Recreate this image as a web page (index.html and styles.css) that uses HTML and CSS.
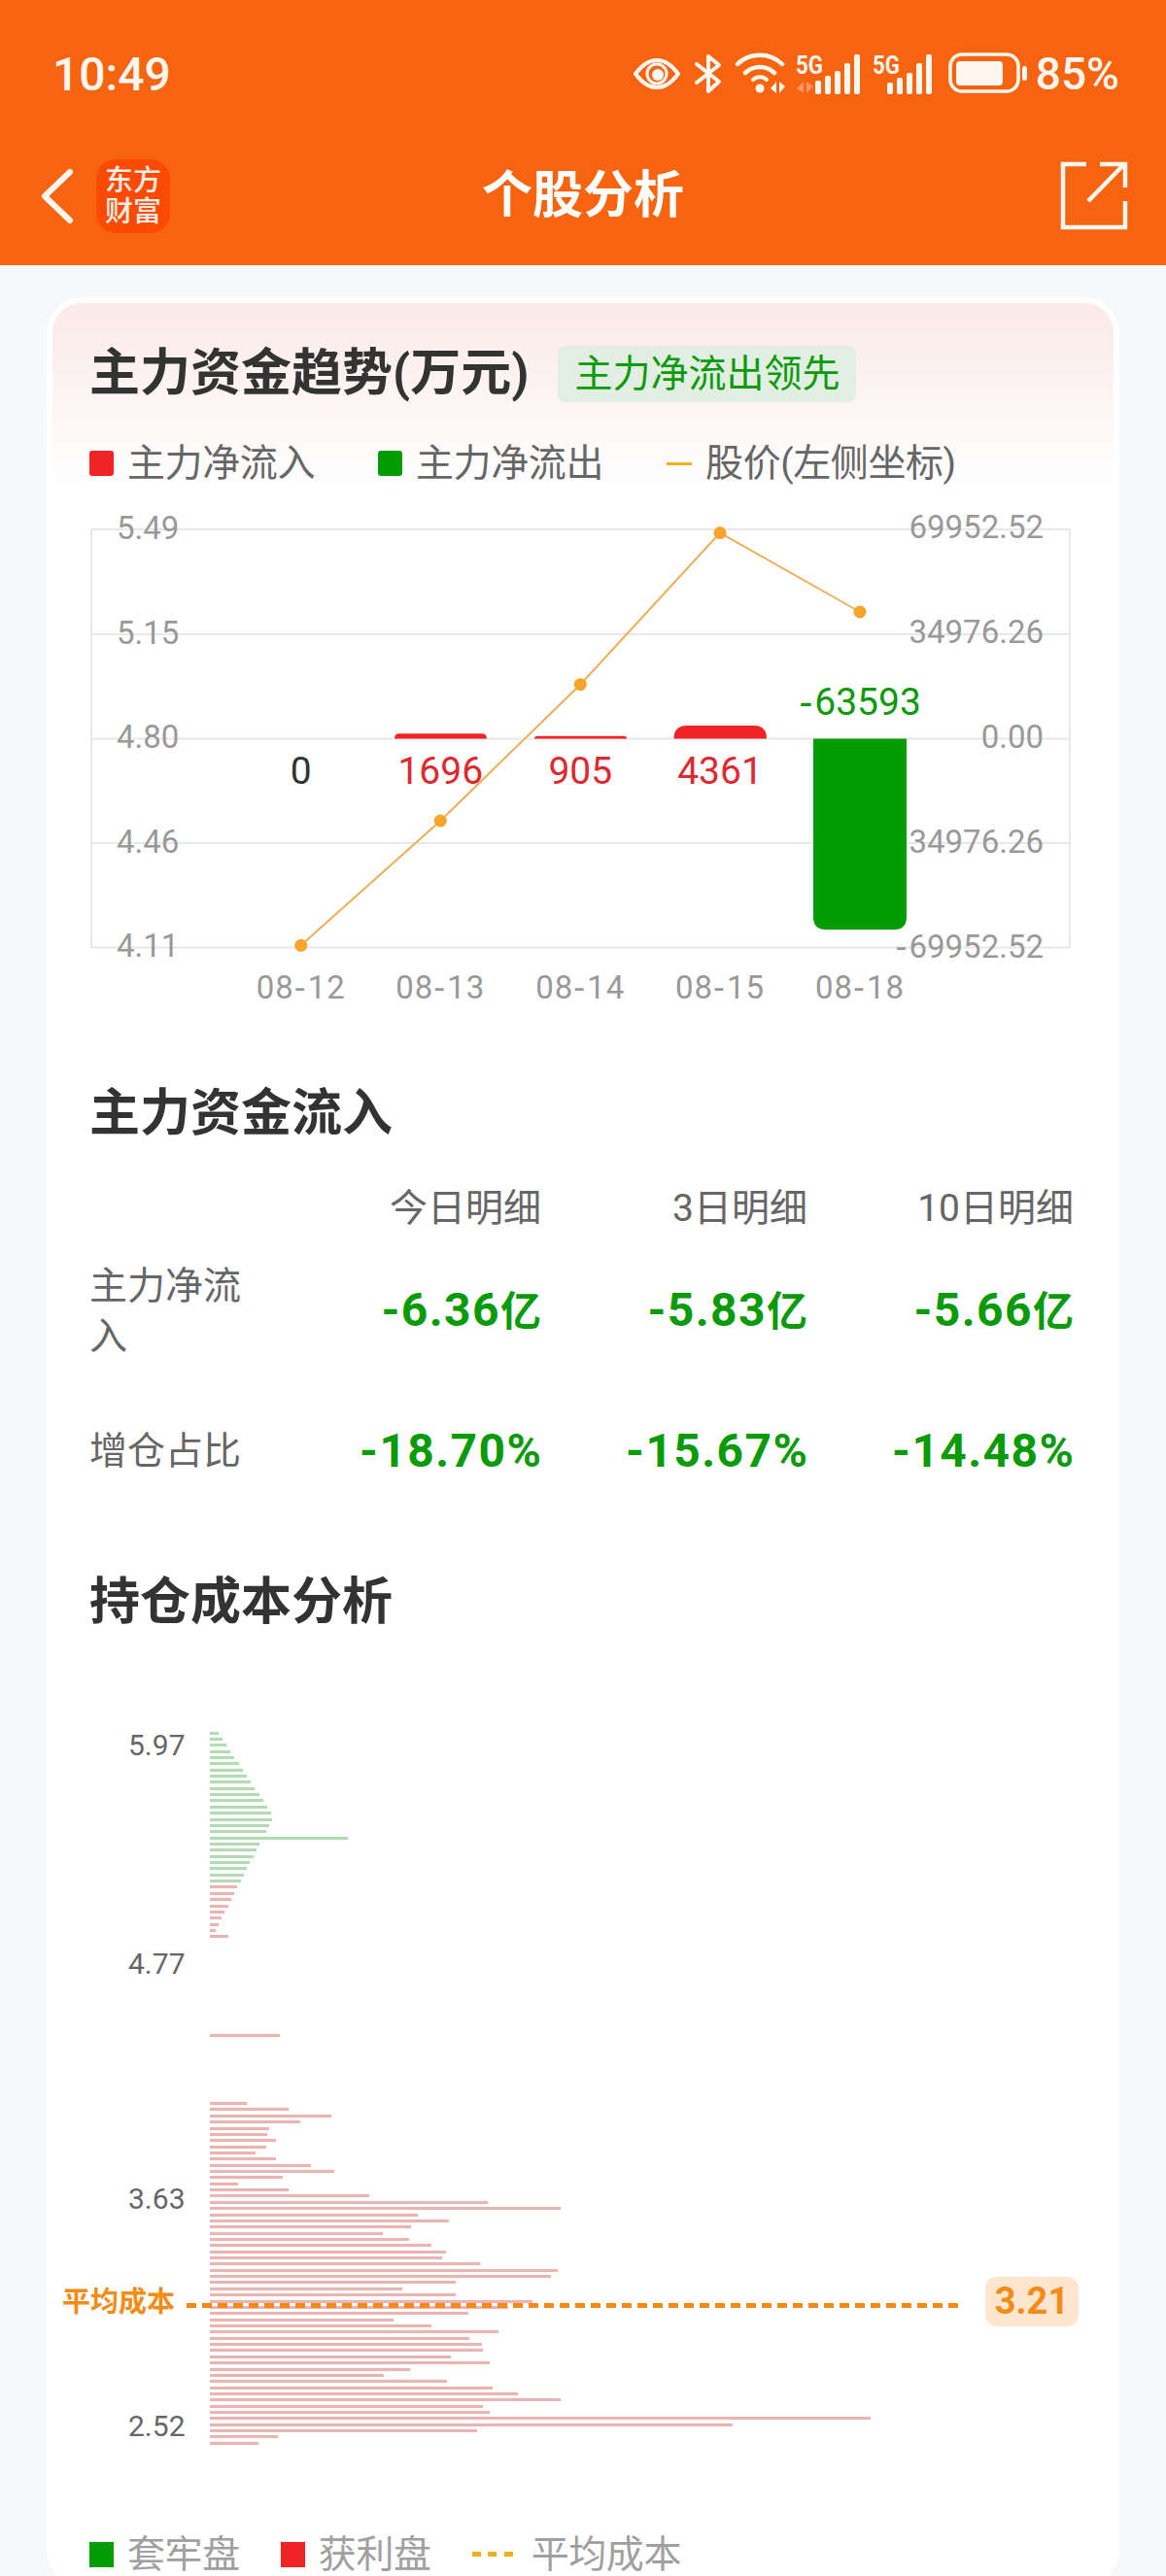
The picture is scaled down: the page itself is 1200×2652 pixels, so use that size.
FILE: index.html
```html
<!DOCTYPE html>
<html lang="zh-CN">
<head>
    <meta charset="UTF-8">
    <title>个股分析</title>
    <meta name="viewport" content="width=device-width, initial-scale=1.0">
    <link rel="stylesheet" href="styles.css">
</head>
<body>
    <header class="topbar">
        <div class="status">
            <span class="clock">10:49</span>
            <div class="status-right">
                <svg class="status-icons" width="406" height="52" viewBox="654 50 406 52">
                    <!-- eye -->
                    <path class="ico" stroke-width="4" d="M656 76C664 65 672 62 678 62C684 62 692 65 700 76C692 87 684 90 678 90C672 90 664 87 656 76Z"/>
                    <circle class="ico" stroke-width="3" cx="678" cy="76" r="10"/>
                    <circle class="ico-fill" cx="679" cy="77" r="6"/>
                    <!-- bluetooth -->
                    <path class="ico" stroke-width="4" d="M719 66L742 84L731 94V58L742 67L719 85"/>
                    <!-- wifi -->
                    <path class="ico" stroke-width="4.5" d="M761 66A33 33 0 0 1 807 66M769 75A22 22 0 0 1 799 75"/>
                    <path class="ico" stroke-width="4" d="M777 82A10 10 0 0 1 791 82"/>
                    <circle class="ico-fill" cx="784" cy="91" r="4.5"/>
                    <polygon class="ico-fill" points="801,84 801,96 795,91"/>
                    <polygon class="ico-fill" points="804,84 804,96 810,89"/>
                    <!-- first sim -->
                    <text class="sim" x="821" y="76" textLength="28" lengthAdjust="spacingAndGlyphs">5G</text>
                    <polygon class="ico-faint" points="829,84 829,96 822,91"/>
                    <polygon class="ico-faint" points="832,84 832,96 839,89"/>
                    <rect class="ico-fill" x="841" y="83" width="6" height="14" rx="2"/>
                    <rect class="ico-fill" x="851" y="78" width="6" height="19" rx="2"/>
                    <rect class="ico-fill" x="861" y="73" width="6" height="24" rx="2"/>
                    <rect class="ico-fill" x="871" y="65" width="6" height="32" rx="2"/>
                    <rect class="ico-fill" x="881" y="56" width="6" height="41" rx="2"/>
                    <!-- second sim -->
                    <text class="sim" x="900" y="76" textLength="28" lengthAdjust="spacingAndGlyphs">5G</text>
                    <rect class="ico-fill" x="915" y="85" width="6" height="12" rx="2"/>
                    <rect class="ico-fill" x="925" y="80" width="6" height="17" rx="2"/>
                    <rect class="ico-fill" x="935" y="75" width="6" height="22" rx="2"/>
                    <rect class="ico-fill" x="945" y="65" width="6" height="32" rx="2"/>
                    <rect class="ico-fill" x="955" y="56" width="6" height="41" rx="2"/>
                    <!-- battery -->
                    <rect class="ico" stroke-width="3.5" x="980" y="56" width="70" height="38" rx="12"/>
                    <rect class="ico-fill" x="986" y="63" width="48" height="25" rx="4"/>
                    <rect class="ico-fill" x="1054" y="68" width="5" height="15" rx="2.5"/>
                </svg>
                <span class="battery-pct">85%</span>
            </div>
        </div>
        <nav class="nav">
            <div class="nav-left">
                <svg width="38" height="62" viewBox="40 172 38 62">
                    <path class="ico" stroke-width="6" d="M72 178L46 203L72 228"/>
                </svg>
                <div class="app-logo">东方<br>财富</div>
            </div>
            <h1 class="nav-title">个股分析</h1>
            <div class="nav-right">
                <svg width="72" height="74" viewBox="1092 165 72 74">
                    <path class="ico-square" stroke-width="4.5" d="M1120 169H1096V234H1160V207M1122 207L1159 169M1134 169H1160V193"/>
                </svg>
            </div>
        </nav>
    </header>

    <main class="page">
        <div class="card">
            <div class="card-inner">
                <div class="trend-head">
                    <h2 class="sec-title">主力资金趋势(万元)</h2>
                    <span class="lead-tag">主力净流出领先</span>
                </div>
                <div class="legend trend-legend">
                    <span class="legend-item"><i class="swatch swatch-red"></i>主力净流入</span>
                    <span class="legend-item"><i class="swatch swatch-green"></i>主力净流出</span>
                    <span class="legend-item"><i class="dash-solid"></i>股价(左侧坐标)</span>
                </div>

                <svg class="trend-chart" width="1092" height="520" viewBox="54 520 1092 520">
                    <line class="grid-line" x1="94" y1="545" x2="1101" y2="545"/>
                    <line class="grid-line" x1="94" y1="653" x2="1101" y2="653"/>
                    <line class="grid-line" x1="94" y1="760.5" x2="1101" y2="760.5"/>
                    <line class="grid-line" x1="94" y1="868" x2="1101" y2="868"/>
                    <line class="grid-line" x1="94" y1="975.5" x2="1101" y2="975.5"/>
                    <line class="grid-line" x1="94" y1="545" x2="94" y2="975.5"/>
                    <line class="grid-line" x1="1101" y1="545" x2="1101" y2="975.5"/>

                    <text class="axis-label" x="120" y="555">5.49</text>
                    <text class="axis-label" x="120" y="663">5.15</text>
                    <text class="axis-label" x="120" y="770">4.80</text>
                    <text class="axis-label" x="120" y="878">4.46</text>
                    <text class="axis-label" x="120" y="985">4.11</text>

                    <path class="bar-red" d="M406 760.5Q406 755.3 411 755.3H496Q501 755.3 501 760.5Z"/>
                    <path class="bar-red" d="M550 760.5Q550 757.7 553 757.7H642Q645 757.7 645 760.5Z"/>
                    <path class="bar-red" d="M693.5 760.5Q693.5 747 707 747H776Q789 747 789 760.5Z"/>
                    <path class="bar-green" d="M837 760.5H933V944Q933 957 920 957H850Q837 957 837 944Z"/>

                    <text class="axis-label axis-end" x="1074" y="554">69952.52</text>
                    <text class="axis-label axis-end" x="1074" y="662">34976.26</text>
                    <text class="axis-label axis-end" x="1074" y="770">0.00</text>
                    <text class="axis-label axis-end" x="1074" y="878">34976.26</text>
                    <text class="axis-label axis-end" x="1074" y="986"><tspan class="wide-dash">-</tspan>69952.52</text>

                    <polyline class="price-line" points="309.7,973.3 453.3,845 597.3,704.7 741,548.6 885,630"/>
                    <circle class="price-dot" cx="309.7" cy="973.3" r="6.5"/>
                    <circle class="price-dot" cx="453.3" cy="845" r="6.5"/>
                    <circle class="price-dot" cx="597.3" cy="704.7" r="6.5"/>
                    <circle class="price-dot" cx="741" cy="548.6" r="6.5"/>
                    <circle class="price-dot" cx="885" cy="630" r="6.5"/>

                    <text class="bar-value value-zero" x="309.7" y="807">0</text>
                    <text class="bar-value value-red" x="453.3" y="807">1696</text>
                    <text class="bar-value value-red" x="597.3" y="807">905</text>
                    <text class="bar-value value-red" x="741" y="807">4361</text>
                    <text class="bar-value value-green" x="885" y="736"><tspan class="wide-dash">-</tspan>63593</text>

                    <text class="axis-label axis-date" x="309.7" y="1028">08<tspan class="wide-dash">-</tspan>12</text>
                    <text class="axis-label axis-date" x="453.3" y="1028">08<tspan class="wide-dash">-</tspan>13</text>
                    <text class="axis-label axis-date" x="597.3" y="1028">08<tspan class="wide-dash">-</tspan>14</text>
                    <text class="axis-label axis-date" x="741" y="1028">08<tspan class="wide-dash">-</tspan>15</text>
                    <text class="axis-label axis-date" x="885" y="1028">08<tspan class="wide-dash">-</tspan>18</text>
                </svg>

                <h2 class="sec-title flow-title">主力资金流入</h2>
                <div class="flow-table">
                    <span></span>
                    <span class="flow-head">今日明细</span>
                    <span class="flow-head">3日明细</span>
                    <span class="flow-head">10日明细</span>
                    <span class="flow-label">主力净流入</span>
                    <span class="flow-value">-6.36<span class="flow-unit">亿</span></span>
                    <span class="flow-value">-5.83<span class="flow-unit">亿</span></span>
                    <span class="flow-value">-5.66<span class="flow-unit">亿</span></span>
                    <span class="flow-label">增仓占比</span>
                    <span class="flow-value">-18.70%</span>
                    <span class="flow-value">-15.67%</span>
                    <span class="flow-value">-14.48%</span>
                </div>

                <h2 class="sec-title cost-title">持仓成本分析</h2>
                <div class="cost-chart">
                    <div class="bar up" style="width:9px"></div>
                    <div class="bar up" style="width:13px"></div>
                    <div class="bar up" style="width:17px"></div>
                    <div class="bar up" style="width:21px"></div>
                    <div class="bar up" style="width:25px"></div>
                    <div class="bar up" style="width:30px"></div>
                    <div class="bar up" style="width:34px"></div>
                    <div class="bar up" style="width:38px"></div>
                    <div class="bar up" style="width:42px"></div>
                    <div class="bar up" style="width:46px"></div>
                    <div class="bar up" style="width:51px"></div>
                    <div class="bar up" style="width:55px"></div>
                    <div class="bar up" style="width:59px"></div>
                    <div class="bar up" style="width:63px"></div>
                    <div class="bar up" style="width:64px"></div>
                    <div class="bar up" style="width:61px"></div>
                    <div class="bar up" style="width:58px"></div>
                    <div class="bar up" style="width:142px"></div>
                    <div class="bar up" style="width:51px"></div>
                    <div class="bar up" style="width:48px"></div>
                    <div class="bar up" style="width:45px"></div>
                    <div class="bar up" style="width:41px"></div>
                    <div class="bar up" style="width:38px"></div>
                    <div class="bar up" style="width:35px"></div>
                    <div class="bar up" style="width:32px"></div>
                    <div class="bar down" style="width:28px"></div>
                    <div class="bar down" style="width:25px"></div>
                    <div class="bar down" style="width:22px"></div>
                    <div class="bar down" style="width:19px"></div>
                    <div class="bar down" style="width:15px"></div>
                    <div class="bar down" style="width:12px"></div>
                    <div class="bar down" style="width:9px"></div>
                    <div class="bar down" style="width:6px"></div>
                    <div class="bar down" style="width:19px"></div>
                    <div class="bar-gap-long"></div>
                    <div class="bar down" style="width:72px"></div>
                    <div class="bar-gap-short"></div>
                    <div class="bar down" style="width:38px"></div>
                    <div class="bar down" style="width:81px"></div>
                    <div class="bar down" style="width:125px"></div>
                    <div class="bar down" style="width:93px"></div>
                    <div class="bar down" style="width:61px"></div>
                    <div class="bar down" style="width:59px"></div>
                    <div class="bar down" style="width:68px"></div>
                    <div class="bar down" style="width:58px"></div>
                    <div class="bar down" style="width:47px"></div>
                    <div class="bar down" style="width:68px"></div>
                    <div class="bar down" style="width:104px"></div>
                    <div class="bar down" style="width:128px"></div>
                    <div class="bar down" style="width:75px"></div>
                    <div class="bar down" style="width:29px"></div>
                    <div class="bar down" style="width:81px"></div>
                    <div class="bar down" style="width:164px"></div>
                    <div class="bar down" style="width:286px"></div>
                    <div class="bar down" style="width:361px"></div>
                    <div class="bar down" style="width:214px"></div>
                    <div class="bar down" style="width:246px"></div>
                    <div class="bar down" style="width:207px"></div>
                    <div class="bar down" style="width:178px"></div>
                    <div class="bar down" style="width:205px"></div>
                    <div class="bar down" style="width:228px"></div>
                    <div class="bar down" style="width:243px"></div>
                    <div class="bar down" style="width:239px"></div>
                    <div class="bar down" style="width:278px"></div>
                    <div class="bar down" style="width:358px"></div>
                    <div class="bar down" style="width:351px"></div>
                    <div class="bar down" style="width:253px"></div>
                    <div class="bar down" style="width:198px"></div>
                    <div class="bar down" style="width:253px"></div>
                    <div class="bar down" style="width:332px"></div>
                    <div class="bar down" style="width:307px"></div>
                    <div class="bar down" style="width:266px"></div>
                    <div class="bar down" style="width:189px"></div>
                    <div class="bar down" style="width:228px"></div>
                    <div class="bar down" style="width:297px"></div>
                    <div class="bar down" style="width:267px"></div>
                    <div class="bar down" style="width:280px"></div>
                    <div class="bar down" style="width:281px"></div>
                    <div class="bar down" style="width:248px"></div>
                    <div class="bar down" style="width:288px"></div>
                    <div class="bar down" style="width:206px"></div>
                    <div class="bar down" style="width:179px"></div>
                    <div class="bar down" style="width:244px"></div>
                    <div class="bar down" style="width:291px"></div>
                    <div class="bar down" style="width:317px"></div>
                    <div class="bar down" style="width:361px"></div>
                    <div class="bar down" style="width:281px"></div>
                    <div class="bar down" style="width:288px"></div>
                    <div class="bar down" style="width:680px"></div>
                    <div class="bar down" style="width:538px"></div>
                    <div class="bar down" style="width:275px"></div>
                    <div class="bar down" style="width:70px"></div>
                    <div class="bar down" style="width:50px"></div>

                    <span class="price-tick tick-597">5.97</span>
                    <span class="price-tick tick-477">4.77</span>
                    <span class="price-tick tick-363">3.63</span>
                    <span class="price-tick tick-252">2.52</span>
                    <span class="avg-label">平均成本</span>
                    <div class="avg-line"></div>
                    <span class="avg-value">3.21</span>
                </div>
                <div class="legend cost-legend">
                    <span class="legend-item"><i class="swatch-flat swatch-green"></i>套牢盘</span>
                    <span class="legend-item"><i class="swatch-flat swatch-red"></i>获利盘</span>
                    <span class="legend-item"><i class="dash-dotted"></i>平均成本</span>
                </div>
            </div>
        </div>
    </main>
</body>
</html>
```

FILE: styles.css
```css
:root {
    --orange: #f76410;
    --ink: #333333;
    --grey: #666666;
    --light: #999999;
    --red: #f02425;
    --green: #049c04;
    --cost: #f28c16;
}
html, body {
    margin: 0;
    padding: 0;
}
body {
    width: 1200px;
    height: 2652px;
    overflow: hidden;
    background: #f7f8fa;
    font-family: Roboto, "Noto Sans CJK SC", sans-serif;
    color: var(--ink);
}
h1, h2 {
    margin: 0;
}

/* top bar */
.topbar {
    height: 273px;
    background: var(--orange);
    color: #fff;
}
.status {
    height: 152px;
    padding: 0 48px 0 54px;
    box-sizing: border-box;
    display: flex;
    align-items: center;
    justify-content: space-between;
    color: #fff6f0;
}
.clock {
    font-size: 48px;
    font-weight: 500;
}
.status-right {
    display: flex;
    align-items: center;
    gap: 8px;
}
.battery-pct {
    font-size: 46px;
    font-weight: 500;
}
.ico {
    fill: none;
    stroke: #fff6f0;
    stroke-linecap: round;
    stroke-linejoin: round;
}
.ico-square {
    fill: none;
    stroke: #fff6f0;
}
.ico-fill {
    fill: #fff6f0;
}
.ico-faint {
    fill: #fb9561;
}
.sim {
    fill: #fff6f0;
    font-size: 25px;
    font-weight: 700;
}
.nav {
    height: 121px;
    padding: 0 38px 21px;
    box-sizing: border-box;
    display: grid;
    grid-template-columns: 1fr auto 1fr;
    align-items: center;
}
.nav-left {
    display: flex;
    align-items: center;
    gap: 21px;
    padding-left: 2px;
}
.nav-right {
    display: flex;
    justify-content: flex-end;
}
.app-logo {
    width: 76px;
    height: 76px;
    border-radius: 20px;
    background: #fb4a04;
    color: #ffeee6;
    font-size: 29px;
    font-weight: 500;
    line-height: 32px;
    text-align: center;
    padding-top: 6px;
    box-sizing: border-box;
}
.nav-title {
    font-size: 52px;
    font-weight: 700;
    line-height: 72px;
}

/* card */
.page {
    padding: 33px 48px 0;
}
.card {
    background: #fff;
    border-radius: 36px;
    padding: 6px;
}
.card-inner {
    padding: 37px 39px 0 38px;
    border-radius: 30px;
    background: linear-gradient(#fae9e8 0, #ffffff 190px);
}
.sec-title {
    font-size: 52px;
    font-weight: 700;
    line-height: 72px;
    color: var(--ink);
}
.trend-head {
    display: flex;
    align-items: center;
    gap: 30px;
}
.lead-tag {
    height: 58px;
    padding: 0 17px;
    border-radius: 8px;
    background: #e3eee3;
    color: #0a9a0a;
    font-size: 39px;
    line-height: 58px;
}

/* legends */
.legend {
    display: flex;
    align-items: center;
    line-height: 52px;
    font-size: 39px;
}
.trend-legend {
    margin-top: 30px;
    gap: 65px;
    letter-spacing: -0.4px;
    color: var(--grey);
}
.legend-item {
    display: flex;
    align-items: center;
    gap: 14px;
}
.swatch {
    width: 25px;
    height: 26px;
    border-radius: 3px;
}
.swatch-flat {
    width: 25px;
    height: 26px;
}
.swatch-red {
    background: var(--red);
}
.swatch-green {
    background: var(--green);
}
.dash-solid {
    width: 26px;
    height: 3px;
    background: #eeb01f;
}
.dash-dotted {
    width: 42px;
    height: 5px;
    margin-right: 5px;
    background: repeating-linear-gradient(90deg, #eeb01f 0 9px, transparent 9px 16.5px);
}
.cost-legend {
    margin-top: 87px;
    gap: 42px;
    letter-spacing: -0.4px;
    color: #a0a0a0;
}

/* trend chart */
.trend-chart {
    display: block;
    margin: 17px -39px 0 -38px;
}
.grid-line {
    stroke: #e8e8e8;
    stroke-width: 2;
}
.axis-label {
    fill: var(--light);
    font-size: 33px;
}
.axis-end {
    text-anchor: end;
}
.axis-date {
    text-anchor: middle;
    letter-spacing: 1px;
}
.wide-dash {
    font-family: "DejaVu Sans", sans-serif;
    letter-spacing: 2px;
}
.bar-red {
    fill: var(--red);
}
.bar-green {
    fill: var(--green);
}
.price-line {
    fill: none;
    stroke: #efae58;
    stroke-width: 2;
}
.price-dot {
    fill: #f7a42c;
}
.bar-value {
    font-size: 39px;
    text-anchor: middle;
}
.value-zero {
    fill: var(--ink);
}
.value-red {
    fill: #dc2a30;
}
.value-green {
    fill: #0a9a0a;
}

/* inflow table */
.flow-title {
    margin-top: 71px;
}
.flow-table {
    margin-top: 35px;
    display: grid;
    grid-template-columns: 191px 274px 274px 274px;
    grid-template-rows: 52px 160px 128px;
    align-items: center;
}
.flow-head {
    text-align: right;
    font-size: 39px;
    line-height: 52px;
    color: var(--grey);
}
.flow-label {
    width: 160px;
    font-size: 39px;
    line-height: 52.5px;
    color: var(--grey);
}
.flow-value {
    text-align: right;
    font-size: 48px;
    font-weight: 700;
    line-height: 52px;
    letter-spacing: 1.4px;
    margin-right: -1.4px;
    color: #0a9a0a;
}
.flow-unit {
    font-size: 42px;
}

/* cost distribution */
.cost-title {
    margin-top: 56px;
}
.cost-chart {
    position: relative;
    padding: 96.5px 0 0 124px;
}
.bar {
    height: 3px;
    margin-bottom: 3.36px;
}
.up {
    background: #b3dcb3;
    box-shadow: 0 0 1px #b3dcb3;
}
.down {
    background: #ecb3b3;
    box-shadow: 0 0 1px #f3cccc;
}
.bar-gap-long {
    height: 95.4px;
}
.bar-gap-short {
    height: 63.6px;
}
.price-tick {
    position: absolute;
    left: 40px;
    font-size: 30px;
    line-height: 40px;
    color: var(--grey);
}
.tick-597 { top: 91px; }
.tick-477 { top: 316px; }
.tick-363 { top: 558px; }
.tick-252 { top: 792px; }
.avg-label {
    position: absolute;
    left: -28px;
    top: 664px;
    font-size: 29px;
    font-weight: 700;
    line-height: 40px;
    color: var(--cost);
}
.avg-line {
    position: absolute;
    left: 100px;
    top: 684.5px;
    width: 795px;
    height: 5px;
    background: repeating-linear-gradient(90deg, var(--cost) 0 10px, transparent 10px 16px);
}
.avg-value {
    position: absolute;
    left: 922px;
    top: 658px;
    width: 96px;
    height: 51px;
    border-radius: 12px;
    background: #fde5d0;
    color: var(--cost);
    font-size: 38px;
    font-weight: 700;
    line-height: 51px;
    text-align: center;
}
```
